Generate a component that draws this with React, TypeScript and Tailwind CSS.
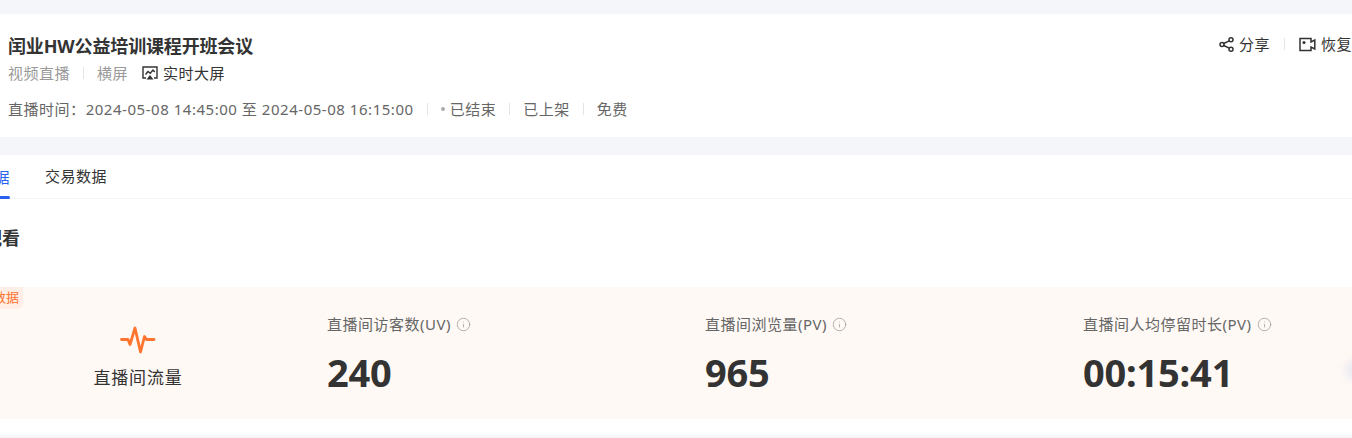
import React from "react";
import { Info } from "lucide-react";

const fontStack = "font-['Noto_Sans','Noto_Sans_CJK_SC',sans-serif]";

const metrics = [
  { label: "直播间访客数(UV)", value: "240" },
  { label: "直播间浏览量(PV)", value: "965" },
  { label: "直播间人均停留时长(PV)", value: "00:15:41" },
];

function Divider({ className = "" }: { className?: string }) {
  return <span className={`h-3 w-px bg-[#e4e4e4] ${className}`} />;
}

function ScreenIcon() {
  return (
    <svg width="16" height="16" viewBox="0 0 16 16" fill="none" stroke="#333" strokeWidth="1.4" className="shrink-0">
      <path d="M4 13H1V2h14v11h-3" />
      <path d="M3.500 9.500 6 6.500l2.200 1.800L11 5l1.800 2" />
      <path d="M8 10 11.500 14.500h-7L8 10Z" fill="#333" stroke="none" />
    </svg>
  );
}

function ShareIcon() {
  return (
    <svg width="15" height="15" viewBox="0 0 15 15" fill="none" stroke="#333" strokeWidth="1.5">
      <circle cx="12" cy="2.800" r="2" />
      <circle cx="3" cy="7.500" r="2" />
      <circle cx="12" cy="12.200" r="2" />
      <path d="M4.800 6.500 10.200 3.800M4.800 8.500l5.400 2.700" />
    </svg>
  );
}

function ReplayIcon() {
  return (
    <svg width="17" height="15" viewBox="0 0 17 15" fill="none" stroke="#333" strokeWidth="1.5">
      <path d="M12 1.500H1v12h11V10l3.800 2V3L12 5V1.500Z" />
      <circle cx="5" cy="5.500" r="1.500" fill="#333" stroke="none" />
    </svg>
  );
}

function PulseIcon() {
  return (
    <svg width="36" height="32" viewBox="0 0 36 32" fill="none" stroke="#ff742e" strokeWidth="2.800" strokeLinejoin="round" strokeLinecap="round">
      <path d="M1.500 15.500h6.500l2 5 5-16.500 5.500 24 4-15.500 2 3h7.500" />
    </svg>
  );
}

export default function App() {
  return (
    <div className={`h-[438px] w-[1352px] overflow-hidden bg-[#f5f6fa] pt-[14px] ${fontStack}`}>
      <div className="flex h-[123px] justify-between bg-white pl-2">
        <div>
          <h1 className="mt-[19px] text-[18px] font-bold leading-[26px] tracking-[-0.15px] text-[#333]">闰业HW公益培训课程开班会议</h1>
          <div className="mt-[2px] flex h-[24px] items-center text-[15px] tracking-[0.5px] text-[#999]">
            <span>视频直播</span>
            <Divider className="mx-[13px]" />
            <span>横屏</span>
            <span className="ml-[14px] flex items-center gap-[5px] text-[#333]">
              <ScreenIcon />
              实时大屏
            </span>
          </div>
          <div className="mt-[12px] flex h-[24px] items-center text-[15px] tracking-[0.53px] text-[#666]">
            <span>直播时间：2024-05-08 14:45:00 至 2024-05-08 16:15:00</span>
            <Divider className="ml-[13px] mr-[13px]" />
            <span className="mr-[5px] size-1 rounded-full bg-[#aaa]" />
            <span>已结束</span>
            <Divider className="ml-[13px] mr-[13px]" />
            <span>已上架</span>
            <Divider className="ml-[13px] mr-[13px]" />
            <span>免费</span>
          </div>
        </div>
        <div className="mt-[19px] flex h-[22px] items-center text-[15px] tracking-[0.5px] text-[#333]">
          <span className="flex items-center gap-[5px]">
            <ShareIcon />
            分享
          </span>
          <Divider className="ml-[14px] mr-[14px]" />
          <span className="flex items-center gap-[5px]">
            <ReplayIcon />
            恢复
          </span>
        </div>
      </div>

      <div className="mt-[18px] h-[280px] bg-white">
        <div className="flex h-[44px] border-b border-[#f3f4f8] text-[15px] tracking-[0.5px]">
          <div className="relative ml-[-52px] flex h-[44px] w-[62px] items-center text-[#2a62f0]">
            直播数据
            <span className="absolute bottom-0 left-0 h-[3px] w-full rounded-sm bg-[#2a62f0]" />
          </div>
          <div className="ml-[35px] flex items-center text-[#333]">交易数据</div>
        </div>
        <h2 className="ml-[-52px] mt-[27px] text-[18px] font-bold leading-6 text-[#333]">直播观看</h2>
        <div className="relative ml-[-51px] mt-[37px] flex h-[132px] w-[1512px] bg-[#fff9f5]">
          <span className="absolute left-0 top-0 flex h-[22px] w-[74px] items-center justify-end rounded-br-md bg-[#ffeee5] pr-[4px] text-[13px] text-[#ff742e]">
            数据
          </span>
          <div className="flex w-[378px] flex-col items-center pt-[37px]">
            <PulseIcon />
            <div className="mt-[10px] text-[17px] leading-6 tracking-[0.8px] text-[#333]">直播间流量</div>
          </div>
          {metrics.map((m) => (
            <div key={m.label} className="w-[378px] pt-[27px]">
              <div className="flex h-5 items-center gap-[5px] text-[15px] tracking-[0.5px] text-[#666]">
                {m.label}
                <Info size={15} strokeWidth={1.2} className="text-[#999]" />
              </div>
              <div className="mt-[13px] text-[38px] font-bold leading-[50px] tracking-[-0.2px] text-[#333]">{m.value}</div>
            </div>
          ))}
          <span className="absolute left-[1396px] top-[73px] size-[20px] rounded-full bg-[#e9e9f2] blur-[4px]" />
        </div>
      </div>
    </div>
  );
}
